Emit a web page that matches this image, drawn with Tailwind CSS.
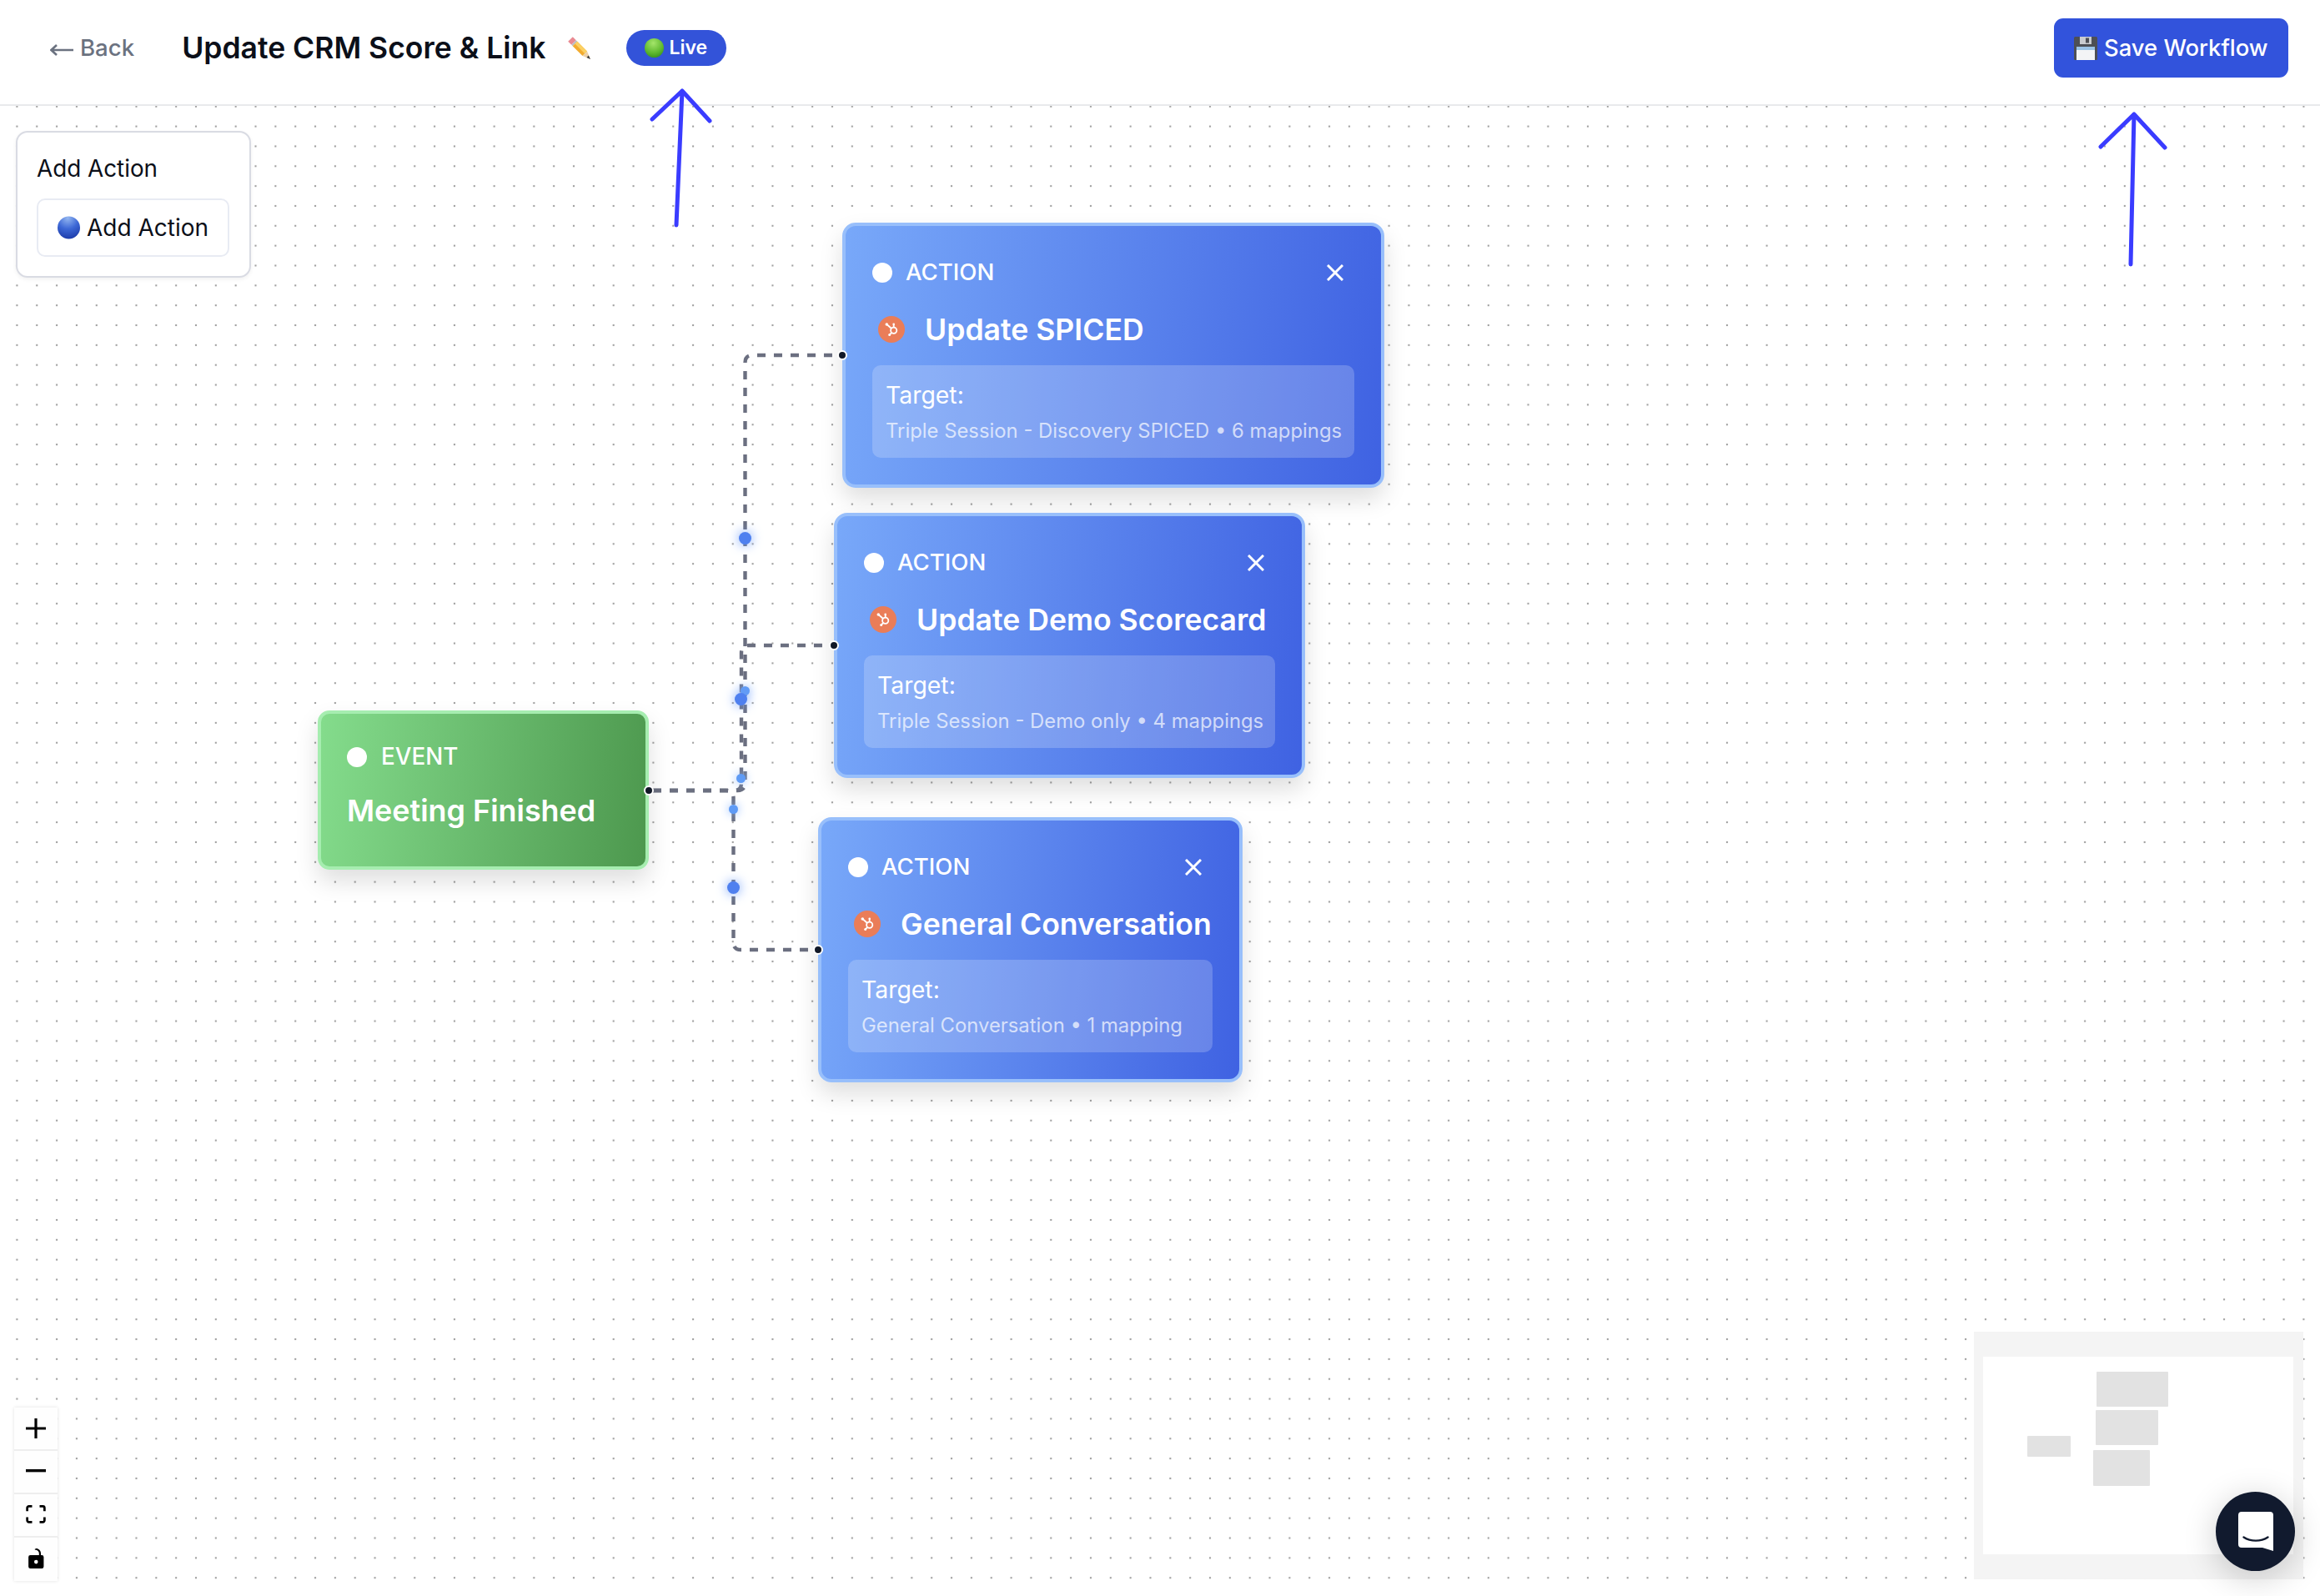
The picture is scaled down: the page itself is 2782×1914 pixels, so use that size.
<!DOCTYPE html>
<html lang="en">
<head>
<meta charset="utf-8">
<title>Update CRM Score &amp; Link</title>
<script src="https://cdn.jsdelivr.net/npm/@tailwindcss/browser@4"></script>
</head>
<body class="bg-white [font-family:Inter,sans-serif]">
<div class="relative w-[2782px] h-[1914px] overflow-hidden flex flex-col bg-white">

  <!-- Header -->
  <header class="h-[127px] shrink-0 flex items-center justify-between bg-white border-b-2 border-[#e9eaec] pl-[60px] pr-[38px] pb-[10px]">
    <div class="flex items-center">
      <a class="flex items-center gap-[8px] text-[27.6px] font-medium text-[#6b7280] leading-none">
        <svg class="w-[28px] h-[14px] mt-[4px]" viewBox="0 0 28 14" fill="none" stroke="#6b7280" stroke-width="2.6"><path d="M1 7 H28 M8 1 L1.5 7 L8 13"/></svg>
        <span>Back</span>
      </a>
      <h1 class="ml-[57px] text-[35.5px] font-semibold text-[#0b0f19] leading-none">Update CRM Score &amp; Link</h1>
      <svg class="ml-[26px] w-[28px] h-[28px]" viewBox="0 0 28 28">
        <polygon points="0.2,5.8 5.8,0.2 9.8,4.2 4.2,9.8" fill="#e98a93"/>
        <polygon points="4.2,9.8 9.8,4.2 11.3,5.7 5.7,11.3" fill="#b9bcc2"/>
        <polygon points="5.7,11.3 11.3,5.7 23,17.5 17.5,23" fill="#f2ab2e"/>
        <polygon points="8.5,8.5 11.3,5.7 23,17.5 20.2,20.2" fill="#fbd063"/>
        <polygon points="17.5,23 23,17.5 27,27" fill="#ecd0a8"/>
        <polygon points="24.8,22.5 27,27 22.5,25" fill="#3a3a3a"/>
      </svg>
      <span class="ml-[42px] h-[43px] w-[120px] rounded-full bg-[#3353d9] flex items-center pl-[22px] gap-[7px] text-[23px] font-semibold text-white leading-none">
        <svg class="w-[23px] h-[23px] shrink-0" viewBox="0 0 24 24"><defs><radialGradient id="gr" cx="45%" cy="25%" r="85%"><stop offset="0" stop-color="#a4e56a"/><stop offset="0.6" stop-color="#5fb92f"/><stop offset="1" stop-color="#2f8a18"/></radialGradient></defs><circle cx="12" cy="12" r="12" fill="url(#gr)"/></svg>
        <span>Live</span>
      </span>
    </div>
    <button class="h-[71px] w-[281px] rounded-[11px] bg-[#3253dc] flex items-center pl-[24px] gap-[8px] text-[27.4px] font-medium text-white leading-none">
      <svg class="w-[28px] h-[28px] shrink-0" viewBox="0 0 28 28">
        <rect x="0" y="0" width="28" height="28" rx="1.5" fill="#4d4f55"/>
        <rect x="7" y="0" width="14" height="9" fill="#c9cbcf"/>
        <rect x="14" y="1.5" width="4" height="6" fill="#4d4f55"/>
        <rect x="3" y="12" width="22" height="16" fill="#f3f4f6"/>
        <rect x="3" y="12" width="22" height="4" fill="#9cc3e6"/>
      </svg>
      <span>Save Workflow</span>
    </button>
  </header>

  <!-- Canvas -->
  <main class="relative flex-1 bg-white bg-[radial-gradient(circle,#a0a0a0_1.1px,transparent_1.6px)] bg-[size:23.85px_23.85px] bg-[position:8.475px_-11.2px]">

    <!-- Edges -->
    <svg class="absolute left-0 top-0 w-[2782px] h-[1787px]" viewBox="0 127 2782 1787" fill="none">
      <g stroke="#6b6f80" stroke-width="4.4" stroke-dasharray="10 10" stroke-dashoffset="-5">
        <path d="M778 948 H884.5 Q893.5 948 893.5 939 V435 Q893.5 426 902.5 426 H1010"/>
        <path d="M778 948 H880 Q889 948 889 939 V783 Q889 774 898 774 H1000"/>
        <path d="M778 948 H870.5 Q879.5 948 879.5 957 V1130 Q879.5 1139 888.5 1139 H981"/>
      </g>
    </svg>

    <!-- Event node -->
    <div class="absolute left-[381px] top-[725px] w-[397px] h-[191px] rounded-[14px] border-[4px] border-[#a6edb0] bg-[linear-gradient(97deg,#84dc8c,#4d984e)] shadow-[0_14px_28px_rgba(0,0,0,0.13)] px-[31px] pt-[37px] flex flex-col text-white">
      <div class="flex items-center h-[30px]">
        <span class="w-[24px] h-[24px] rounded-full bg-white"></span>
        <span class="ml-[17px] text-[27.8px] font-medium leading-none">EVENT</span>
      </div>
      <div class="mt-[27px] text-[35.9px] font-semibold leading-[44px]">Meeting Finished</div>
    </div>

    <!-- Action node 1 -->
    <div class="absolute left-[1010px] top-[140px] w-[650px] h-[318px] rounded-[16px] border-[4px] border-[#98bffb] bg-[linear-gradient(97deg,#78a8f9,#3f62e2)] shadow-[0_14px_28px_rgba(0,0,0,0.13)] px-[32px] pt-[41px] flex flex-col text-white">
      <div class="flex items-center h-[30px]">
        <span class="w-[24px] h-[24px] rounded-full bg-white"></span>
        <span class="ml-[16px] text-[27.6px] font-medium leading-none">ACTION</span>
        <svg class="ml-auto mr-[13px] w-[20px] h-[20px]" viewBox="0 0 20 20" stroke="white" stroke-width="3" fill="none"><path d="M1 1 L19 19 M19 1 L1 19"/></svg>
      </div>
      <div class="mt-[31px] h-[44px] flex items-center pl-[7px]">
        <svg class="w-[32px] h-[32px] shrink-0" viewBox="0 0 32 32"><circle cx="16" cy="16" r="16" fill="#ea7d58"/><g stroke="white" fill="none" stroke-width="1.8"><circle cx="18.7" cy="17.3" r="3.6"/><path d="M11 10.5 L16 15 M18.7 13.5 V10 M16.2 20 L14 22.2"/></g><circle cx="10.3" cy="10" r="1.8" fill="white"/><circle cx="13.7" cy="22.5" r="1.5" fill="white"/><circle cx="18.7" cy="9.8" r="1.3" fill="white"/></svg>
        <span class="ml-[24px] mt-[1px] text-[35.6px] font-semibold leading-none whitespace-nowrap">Update SPICED</span>
      </div>
      <div class="mt-[21px] h-[111px] rounded-[10px] bg-white/20 px-[16px] pt-[21px]">
        <div class="text-[28.4px] leading-[30px] whitespace-nowrap">Target:</div>
        <div class="mt-[13px] text-[23.85px] leading-[30px] text-white/70 whitespace-nowrap">Triple Session - Discovery SPICED • 6 mappings</div>
      </div>
    </div>

    <!-- Action node 2 -->
    <div class="absolute left-[1000px] top-[488px] w-[565px] h-[318px] rounded-[16px] border-[4px] border-[#98bffb] bg-[linear-gradient(97deg,#78a8f9,#3f62e2)] shadow-[0_14px_28px_rgba(0,0,0,0.13)] px-[32px] pt-[41px] flex flex-col text-white">
      <div class="flex items-center h-[30px]">
        <span class="w-[24px] h-[24px] rounded-full bg-white"></span>
        <span class="ml-[16px] text-[27.6px] font-medium leading-none">ACTION</span>
        <svg class="ml-auto mr-[13px] w-[20px] h-[20px]" viewBox="0 0 20 20" stroke="white" stroke-width="3" fill="none"><path d="M1 1 L19 19 M19 1 L1 19"/></svg>
      </div>
      <div class="mt-[31px] h-[44px] flex items-center pl-[7px]">
        <svg class="w-[32px] h-[32px] shrink-0" viewBox="0 0 32 32"><circle cx="16" cy="16" r="16" fill="#ea7d58"/><g stroke="white" fill="none" stroke-width="1.8"><circle cx="18.7" cy="17.3" r="3.6"/><path d="M11 10.5 L16 15 M18.7 13.5 V10 M16.2 20 L14 22.2"/></g><circle cx="10.3" cy="10" r="1.8" fill="white"/><circle cx="13.7" cy="22.5" r="1.5" fill="white"/><circle cx="18.7" cy="9.8" r="1.3" fill="white"/></svg>
        <span class="ml-[24px] mt-[1px] text-[35.6px] font-semibold leading-none whitespace-nowrap">Update Demo Scorecard</span>
      </div>
      <div class="mt-[21px] h-[111px] rounded-[10px] bg-white/20 px-[16px] pt-[21px]">
        <div class="text-[28.4px] leading-[30px] whitespace-nowrap">Target:</div>
        <div class="mt-[13px] text-[23.85px] leading-[30px] text-white/70 whitespace-nowrap">Triple Session - Demo only • 4 mappings</div>
      </div>
    </div>

    <!-- Action node 3 -->
    <div class="absolute left-[981px] top-[853px] w-[509px] h-[318px] rounded-[16px] border-[4px] border-[#98bffb] bg-[linear-gradient(97deg,#78a8f9,#3f62e2)] shadow-[0_14px_28px_rgba(0,0,0,0.13)] px-[32px] pt-[41px] flex flex-col text-white">
      <div class="flex items-center h-[30px]">
        <span class="w-[24px] h-[24px] rounded-full bg-white"></span>
        <span class="ml-[16px] text-[27.6px] font-medium leading-none">ACTION</span>
        <svg class="ml-auto mr-[13px] w-[20px] h-[20px]" viewBox="0 0 20 20" stroke="white" stroke-width="3" fill="none"><path d="M1 1 L19 19 M19 1 L1 19"/></svg>
      </div>
      <div class="mt-[31px] h-[44px] flex items-center pl-[7px]">
        <svg class="w-[32px] h-[32px] shrink-0" viewBox="0 0 32 32"><circle cx="16" cy="16" r="16" fill="#ea7d58"/><g stroke="white" fill="none" stroke-width="1.8"><circle cx="18.7" cy="17.3" r="3.6"/><path d="M11 10.5 L16 15 M18.7 13.5 V10 M16.2 20 L14 22.2"/></g><circle cx="10.3" cy="10" r="1.8" fill="white"/><circle cx="13.7" cy="22.5" r="1.5" fill="white"/><circle cx="18.7" cy="9.8" r="1.3" fill="white"/></svg>
        <span class="ml-[24px] mt-[1px] text-[35.6px] font-semibold leading-none whitespace-nowrap">General Conversation</span>
      </div>
      <div class="mt-[21px] h-[111px] rounded-[10px] bg-white/20 px-[16px] pt-[21px]">
        <div class="text-[28.4px] leading-[30px] whitespace-nowrap">Target:</div>
        <div class="mt-[13px] text-[23.85px] leading-[30px] text-white/70 whitespace-nowrap">General Conversation • 1 mapping</div>
      </div>
    </div>

    <!-- Handles -->
    <span class="absolute left-[772px] top-[815px] w-[12px] h-[12px] rounded-full bg-[#111827] border-2 border-white"></span>
    <span class="absolute left-[1004px] top-[293px] w-[12px] h-[12px] rounded-full bg-[#111827] border-2 border-white"></span>
    <span class="absolute left-[994px] top-[641px] w-[12px] h-[12px] rounded-full bg-[#111827] border-2 border-white"></span>
    <span class="absolute left-[975px] top-[1006px] w-[12px] h-[12px] rounded-full bg-[#111827] border-2 border-white"></span>

    <!-- Flow markers -->
    <span class="absolute left-[886px] top-[511px] w-[15px] h-[15px] rounded-full bg-[#4f80ef] shadow-[0_0_14px_#6f9df8]"></span>
    <span class="absolute left-[888px] top-[696px] w-[11px] h-[11px] rounded-full bg-[#5f9bf5] shadow-[0_0_12px_#8ab6fb]"></span>
    <span class="absolute left-[881px] top-[704px] w-[15px] h-[15px] rounded-full bg-[#4f80ef] shadow-[0_0_14px_#6f9df8]"></span>
    <span class="absolute left-[883px] top-[801px] w-[11px] h-[11px] rounded-full bg-[#5f9bf5] shadow-[0_0_12px_#8ab6fb]"></span>
    <span class="absolute left-[874px] top-[838px] w-[11px] h-[11px] rounded-full bg-[#5f9bf5] shadow-[0_0_12px_#8ab6fb]"></span>
    <span class="absolute left-[872px] top-[930px] w-[15px] h-[15px] rounded-full bg-[#4f80ef] shadow-[0_0_14px_#6f9df8]"></span>

    <!-- Add Action panel -->
    <div class="absolute left-[19px] top-[30px] w-[282px] h-[176px] rounded-[14px] border-2 border-[#d9dbe3] bg-white shadow-[0_2px_5px_rgba(0,0,0,0.06)] px-[23px] pt-[26px]">
      <div class="text-[27.8px] font-normal text-[#0b0f19] leading-[34px]">Add Action</div>
      <button class="mt-[19px] w-[231px] h-[70px] rounded-[10px] border-2 border-[#e8ebf3] bg-white flex items-center pl-[23px] gap-[8px] text-[28px] font-normal text-[#0b0f19] leading-none">
        <svg class="w-[27px] h-[28px] shrink-0" viewBox="0 0 28 28"><defs><radialGradient id="bl" cx="45%" cy="8%" r="95%"><stop offset="0" stop-color="#93b6f0"/><stop offset="0.5" stop-color="#3d68d6"/><stop offset="1" stop-color="#1b3aa8"/></radialGradient></defs><circle cx="14" cy="14" r="14" fill="url(#bl)"/></svg>
        <span>Add Action</span>
      </button>
    </div>

    <!-- Zoom controls -->
    <div class="absolute left-[17px] top-[1561px] w-[52px] flex flex-col bg-[#eeeeee] gap-[2px] shadow-[0_0_4px_rgba(0,0,0,0.12)]">
      <button class="h-[50px] bg-[#fefefe] flex items-center justify-center"><svg class="w-[24px] h-[24px]" viewBox="0 0 32 32"><path d="M32 18.133H18.133V32h-4.266V18.133H0v-4.266h13.867V0h4.266v13.867H32z"/></svg></button>
      <button class="h-[50px] bg-[#fefefe] flex items-center justify-center pb-[2px]"><svg class="w-[24px] h-[4px]" viewBox="0 0 32 5" preserveAspectRatio="none"><path d="M0 0h32v4.2H0z"/></svg></button>
      <button class="h-[50px] bg-[#fefefe] flex items-center justify-center pb-[2px]"><svg class="w-[24px] h-[22px]" viewBox="0 0 32 30"><path d="M3.692 4.63c0-.53.4-.938.939-.938h5.215V0H4.708C2.13 0 0 2.054 0 4.63v5.216h3.692V4.631zM27.354 0h-5.2v3.692h5.17c.53 0 .984.4.984.939v5.215H32V4.631A4.624 4.624 0 0027.354 0zm.954 24.83c0 .532-.4.94-.939.94h-5.215v3.768h5.215c2.577 0 4.631-2.13 4.631-4.707v-5.139h-3.692v5.139zm-23.677.94c-.531 0-.939-.4-.939-.94v-5.138H0v5.139c0 2.577 2.13 4.707 4.708 4.707h5.138V25.77H4.631z"/></svg></button>
      <button class="h-[52px] bg-[#fefefe] flex items-center justify-center pb-[3px]"><svg class="w-[19px] h-[24px]" viewBox="0 0 25 32"><path d="M21.333 10.667H19.81V7.619C19.81 3.429 16.38 0 12.19 0c-4.114 1.828-1.37 2.133.305 2.438 1.676.305 4.42 2.59 4.42 5.181v3.048H3.047A3.056 3.056 0 000 13.714v15.238A3.056 3.056 0 003.048 32h18.285a3.056 3.056 0 003.048-3.048V13.714a3.056 3.056 0 00-3.048-3.047zM12.19 24.533a3.056 3.056 0 01-3.047-3.047 3.056 3.056 0 013.047-3.048 3.056 3.056 0 013.048 3.048 3.056 3.056 0 01-3.048 3.047z"/></svg></button>
    </div>

    <!-- Minimap -->
    <svg class="absolute left-[2367px] top-[1470px] w-[395px] h-[297px]" viewBox="2367 1597 395 297">
      <rect x="2367" y="1597" width="395" height="297" fill="#f4f4f4"/>
      <rect x="2378" y="1627" width="372" height="237" fill="#ffffff"/>
      <rect x="2514" y="1645" width="86" height="42" rx="1" fill="#e2e2e2"/>
      <rect x="2513" y="1691" width="75" height="42" rx="1" fill="#e2e2e2"/>
      <rect x="2510" y="1739" width="68" height="43" rx="1" fill="#e2e2e2"/>
      <rect x="2431" y="1722" width="52" height="25" rx="1" fill="#e2e2e2"/>
    </svg>

    <!-- Chat bubble -->
    <button class="absolute left-[2657px] top-[1662px] w-[95px] h-[95px] rounded-full bg-[#111a2e] shadow-[0_8px_40px_rgba(0,0,0,0.2)] flex items-center justify-center">
      <svg class="w-[42px] h-[47px]" viewBox="0 0 42 47">
        <path d="M4 0H38A4 4 0 0 1 42 4V47L29 43H4A4 4 0 0 1 0 39V4A4 4 0 0 1 4 0Z" fill="white"/>
        <path d="M6.5 30.5C15 36 27 36 35.5 30.5" stroke="#111a2e" stroke-width="2.4" stroke-linecap="round" fill="none"/>
      </svg>
    </button>
  </main>

  <!-- Hand-drawn annotation arrows -->
  <svg class="absolute left-0 top-0 w-[2782px] h-[1914px] pointer-events-none" viewBox="0 0 2782 1914" fill="none" stroke="#3a3cff" stroke-width="5" stroke-linecap="round" stroke-linejoin="round">
    <path d="M811 270 L818 109 M782 143 L818 109 L851 145"/>
    <path d="M2555 317 L2559 137 M2519 176 L2559 137 L2596 177"/>
  </svg>
</div>
</body>
</html>
